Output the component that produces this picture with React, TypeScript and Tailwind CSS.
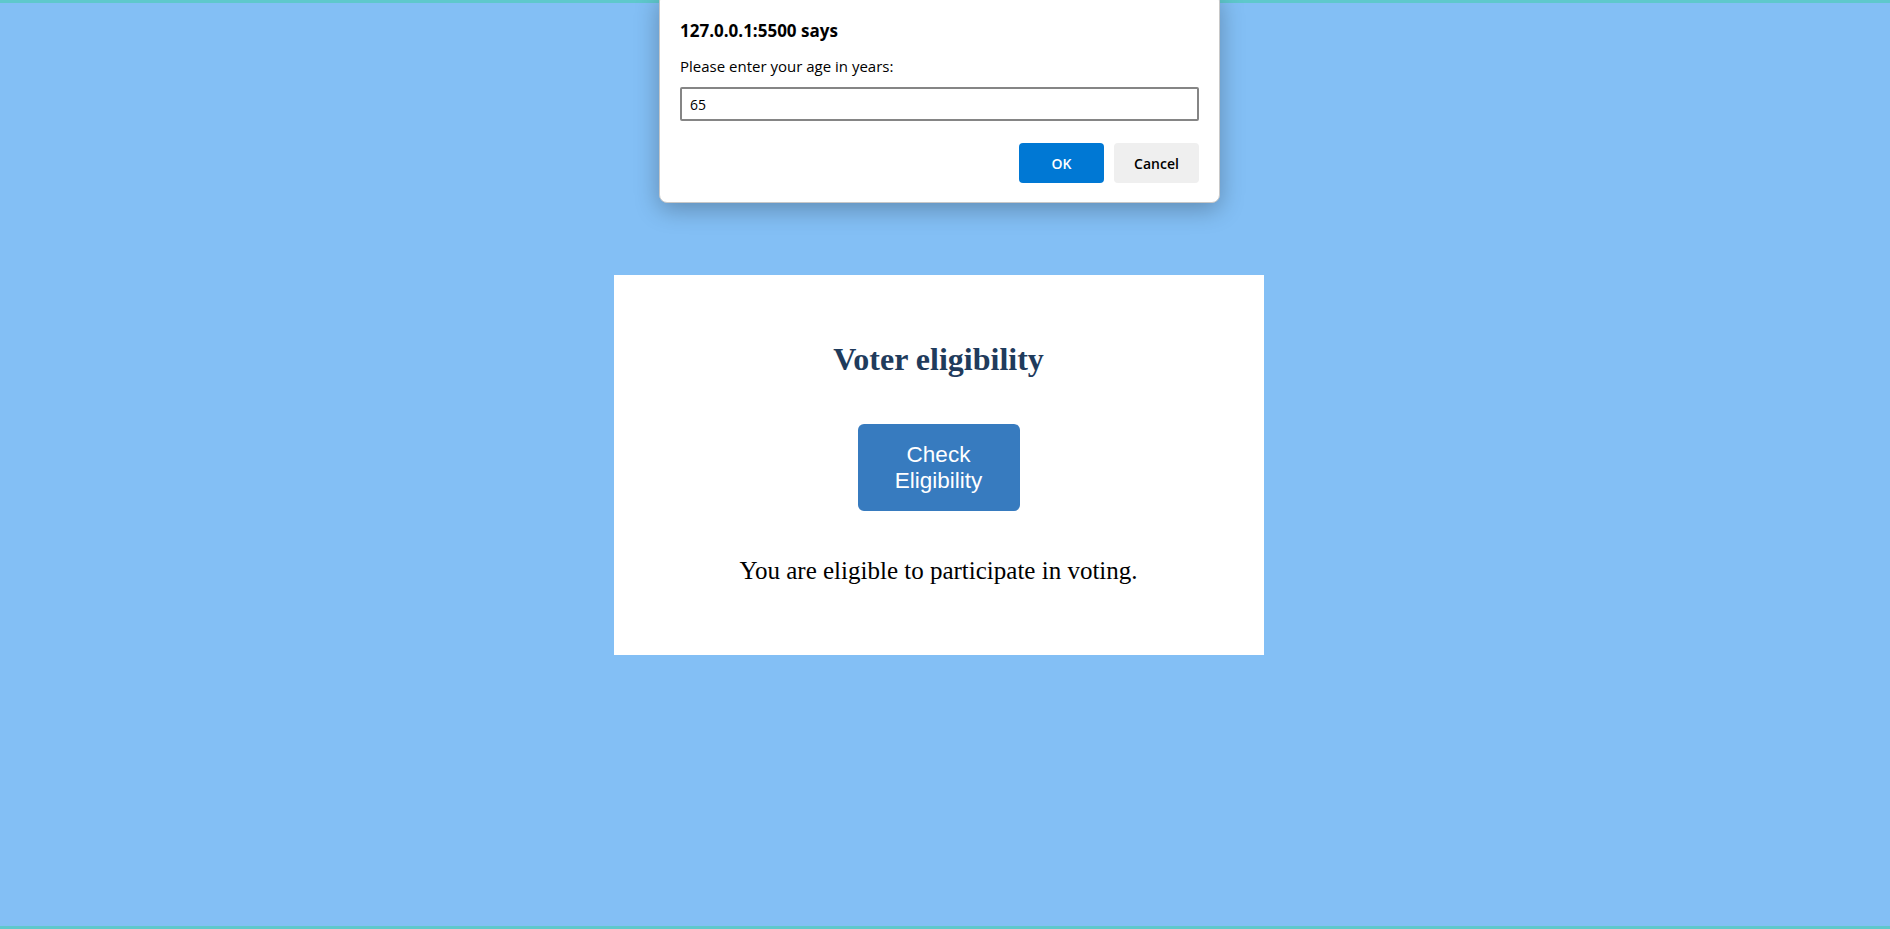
import React from 'react';

const App: React.FC = () => {
    return (
        <div className="relative min-h-screen bg-[#83bff5] border-y-[3px] border-[#5ec8cc]">
            {/* prompt dialog */}
            <div
                className="absolute left-[659px] top-[-10px] w-[561px] bg-white rounded-[8px] border border-[#c8c8c8] shadow-[0_6px_24px_rgba(0,0,0,0.28)] px-[20px] pt-[26px] pb-[19px]"
                style={{ fontFamily: '"Open Sans", "Noto Sans", sans-serif' }}
            >
                <div className="text-[17px] font-bold text-black leading-[22px]">127.0.0.1:5500 says</div>
                <div className="mt-[15px] text-[15px] text-black leading-[19px]">Please enter your age in years:</div>
                <div className="mt-[11px] h-[34px] border-2 border-[#858585] rounded-[2px] flex items-center px-[8px] text-[14px] text-black">
                    65
                </div>
                <div className="mt-[22px] flex justify-end gap-[10px]">
                    <button className="w-[85px] h-[40px] rounded-[4px] bg-[#0078d4] text-white text-[14px] font-semibold">OK</button>
                    <button className="w-[85px] h-[40px] rounded-[4px] bg-[#efefef] text-black text-[14px] font-semibold">Cancel</button>
                </div>
            </div>

            <div className="flex justify-center pt-[272px] pr-[13px]">
                <div className="w-[650px] bg-white flex flex-col items-center pt-[64px] pb-[70px]">
                    <h1
                        className="text-[32px] font-bold leading-[40px] text-[#1f3b5c]"
                        style={{ fontFamily: '"Liberation Serif", serif' }}
                    >
                        Voter eligibility
                    </h1>
                    <button
                        className="mt-[45px] w-[162px] h-[87px] rounded-[6px] bg-[#377bbf] text-white text-[22.5px] leading-[26px]"
                        style={{ fontFamily: '"Liberation Sans", sans-serif' }}
                    >
                        Check
                        <br />
                        Eligibility
                    </button>
                    <p
                        className="mt-[46px] text-[25px] leading-[28px] text-black"
                        style={{ fontFamily: '"Liberation Serif", serif' }}
                    >
                        You are eligible to participate in voting.
                    </p>
                </div>
            </div>
        </div>
    );
};

export default App;
